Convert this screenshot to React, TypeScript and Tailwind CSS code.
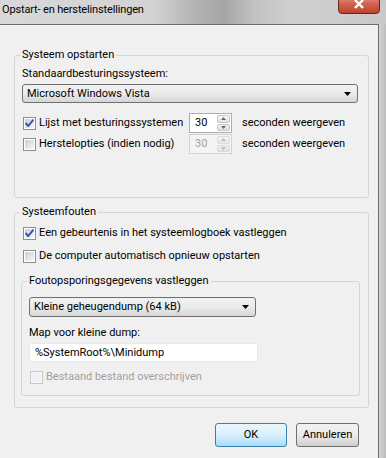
import React from 'react';

const font = 'font-["Roboto","Noto_Sans",sans-serif]';

const Checkbox = ({ checked = false, disabled = false }: { checked?: boolean; disabled?: boolean }) => (
  <span
    className={`flex h-[13px] w-[13px] shrink-0 items-center justify-center border p-px ${
      disabled ? 'border-[#c9c9c9] bg-[#f4f4f4]' : 'border-[#8e8f8f] bg-white'
    }`}
  >
    <span
      className={`relative block h-full w-full ${
        disabled ? 'bg-[#f1f1f1]' : 'bg-gradient-to-br from-[#cbcfd5] to-[#f6f6f6]'
      }`}
    >
      {checked && (
        <svg className="absolute -left-[1px] -top-[1px] h-[11px] w-[11px]" viewBox="0 0 11 11">
          <path d="M2 5.5 L4.3 8 L9 2.2" fill="none" stroke="#3454a8" strokeWidth={1.9} strokeLinecap="round" strokeLinejoin="round" />
        </svg>
      )}
    </span>
  </span>
);

const CheckRow = ({ label, checked, disabled }: { label: string; checked?: boolean; disabled?: boolean }) => (
  <div className="flex h-[16px] items-center">
    <span className="ml-px">
      <Checkbox checked={checked} disabled={disabled} />
    </span>
    <span className={`ml-[3px] whitespace-nowrap ${disabled ? 'text-[#a0a0a0]' : 'text-black'}`}>{label}</span>
  </div>
);

const Arrow = () => (
  <svg width="7" height="4" viewBox="0 0 7 4">
    <path d="M0 0 H7 L3.5 4 Z" fill="#000" />
  </svg>
);

const Combo = ({ value, width }: { value: string; width: string }) => (
  <div
    className={`flex items-center justify-between rounded-[3px] border border-[#707070] bg-gradient-to-b from-[#f2f2f2] via-[#ebebeb] to-[#d6d6d6] pl-[4px] pr-[6px] ${width}`}
  >
    <span className="whitespace-nowrap">{value}</span>
    <Arrow />
  </div>
);

const Spinner = ({ value, disabled = false }: { value: string; disabled?: boolean }) => (
  <div
    className={`flex h-[20px] w-[43px] border ${
      disabled ? 'border-[#d2d2d2] bg-[#f4f4f4] text-[#a0a0a0]' : 'border-[#abadb3] bg-white text-black'
    }`}
  >
    <span className="flex-1 pl-[5px] leading-[18px]">{value}</span>
    <div className="my-px mr-px flex w-[13px] flex-col gap-px">
      <div className={`flex flex-1 items-center justify-center rounded-[2px] border ${disabled ? 'border-[#dcdcdc]' : 'border-[#c3c6cc]'} bg-gradient-to-b from-[#f6f6f6] to-[#e4e4e4]`}>
        <svg width="5" height="3" viewBox="0 0 5 3"><path d="M0 3 L2.5 0 L5 3 Z" fill={disabled ? '#bcbcbc' : '#5a6a82'} /></svg>
      </div>
      <div className={`flex flex-1 items-center justify-center rounded-[2px] border ${disabled ? 'border-[#dcdcdc]' : 'border-[#c3c6cc]'} bg-gradient-to-b from-[#f0f0f0] to-[#e0e0e0]`}>
        <svg width="5" height="3" viewBox="0 0 5 3"><path d="M0 0 H5 L2.5 3 Z" fill={disabled ? '#bcbcbc' : '#5a6a82'} /></svg>
      </div>
    </div>
  </div>
);

const SecondsRow = ({ label, checked, disabled }: { label: string; checked?: boolean; disabled?: boolean }) => (
  <div className="flex h-[20px] items-center">
    <div className="w-[167px]">
      <CheckRow label={label} checked={checked} />
    </div>
    <Spinner value="30" disabled={disabled} />
    <span className="ml-[10px] whitespace-nowrap">seconden weergeven</span>
  </div>
);

export default function App() {
  return (
    <div className={`flex h-[458px] w-[386px] flex-col overflow-hidden bg-[#cfcfcf] text-[11px] leading-[16px] text-black ${font}`}>
      {/* title bar */}
      <div className="flex h-[24px] shrink-0 items-start bg-[linear-gradient(90deg,#d8d8d8_0%,#d3d3d3_40%,#b4b4b4_50%,#a6a6a6_58%,#c2c2c2_66%,#d0d0d0_76%,#c9c9c9_100%)]">
        <span className="ml-[2px] mt-[2px] whitespace-nowrap text-[11px] leading-[16px] tracking-[-0.15px] text-black">Opstart- en herstelinstellingen</span>
        <div className="relative ml-auto mr-[6px] -mt-[7px] flex h-[21px] w-[42px] items-center justify-center rounded-b-[4px] border border-[#5e2a22] bg-gradient-to-b from-[#e8a598] via-[#d06552] to-[#c0402c]">
          <svg width="12" height="10" viewBox="0 0 12 10">
            <path d="M2 1 L10 9 M10 1 L2 9" stroke="#ffffff" strokeWidth={2.4} />
          </svg>
        </div>
      </div>

      <div className="flex flex-1">
        {/* client area */}
        <div className="w-[379px] border-r border-t border-[#6a6a6a] bg-[#f0f0f0]">
          <fieldset className="ml-[14px] mt-[22px] w-[355px] rounded-[3px] border border-[#d5d5d5] pb-[43px] pl-[7px] pr-[10px]">
            <legend className="-ml-[2px] px-[2px]">Systeem opstarten</legend>
            <div className="mt-[3px]">Standaardbesturingssysteem:</div>
            <div className="mt-[2px]">
              <Combo value="Microsoft Windows Vista" width="h-[19px] w-full" />
            </div>
            <div className="mt-[10px]">
              <SecondsRow label="Lijst met besturingssystemen" checked />
            </div>
            <div className="mt-px">
              <SecondsRow label="Herstelopties (indien nodig)" disabled />
            </div>
          </fieldset>

          <fieldset className="ml-[14px] mt-[6px] w-[355px] rounded-[3px] border border-[#d5d5d5] pb-[11px] pl-[7px] pr-[8px]">
            <legend className="-ml-[2px] px-[2px]">Systeemfouten</legend>
            <div className="mt-[5px]">
              <CheckRow label="Een gebeurtenis in het systeemlogboek vastleggen" checked />
            </div>
            <div className="mt-[7px]">
              <CheckRow label="De computer automatisch opnieuw opstarten" />
            </div>

            <fieldset className="-ml-px mt-[9px] rounded-[3px] border border-[#d5d5d5] pb-[10px] pl-[7px]">
              <legend className="-ml-[2px] px-[2px]">Foutopsporingsgegevens vastleggen</legend>
              <div className="mt-[8px]">
                <Combo value="Kleine geheugendump (64 kB)" width="h-[20px] w-[227px]" />
              </div>
              <div className="mt-[8px]">Map voor kleine dump:</div>
              <div className="mt-[2px] flex h-[19px] w-[229px] items-center border border-[#e3e9ef] bg-white pl-[5px]">
                %SystemRoot%\Minidump
              </div>
              <div className="mt-[7px]">
                <CheckRow label="Bestaand bestand overschrijven" disabled />
              </div>
            </fieldset>
          </fieldset>

          <div className="mt-[15px] flex justify-end gap-[9px] pr-[19px]">
            <button className="h-[24px] w-[72px] rounded-[3px] border border-[#3c7fb1] bg-gradient-to-b from-[#eaf6fd] via-[#d9f0fc] to-[#a7d9f5] text-black">
              OK
            </button>
            <button className="h-[24px] w-[63px] rounded-[3px] border border-[#707070] bg-gradient-to-b from-[#f2f2f2] via-[#ebebeb] to-[#cfcfcf] text-black">
              Annuleren
            </button>
          </div>
        </div>
        <div className="flex-1 bg-gradient-to-r from-[#d4d4d4] to-[#bdbdbd]" />
      </div>
    </div>
  );
}
